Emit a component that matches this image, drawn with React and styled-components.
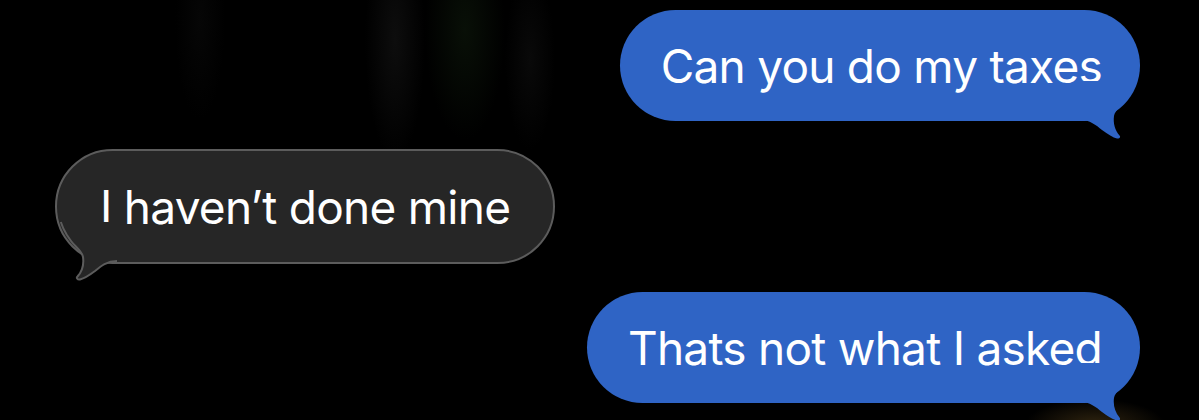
import styled, { createGlobalStyle } from 'styled-components';

const GlobalStyle = createGlobalStyle`
  html, body {
    margin: 0;
    padding: 0;
    background: #000;
  }
  body {
    font-family: Inter, "Noto Sans", sans-serif;
    -webkit-font-smoothing: antialiased;
  }
`;

const Screen = styled.div`
  width: 1199px;
  height: 420px;
  box-sizing: border-box;
  overflow: hidden;
  padding: 10px 59px 0 55px;
  display: flex;
  flex-direction: column;
  gap: 28px;
  background:
    radial-gradient(ellipse 70px 26px at 1095px 425px, rgba(95, 72, 30, 0.5), transparent),
    radial-gradient(ellipse 30px 120px at 395px 40px, rgba(22, 22, 22, 0.6), transparent),
    radial-gradient(ellipse 40px 110px at 465px 30px, rgba(12, 22, 10, 0.7), transparent),
    radial-gradient(ellipse 25px 90px at 530px 60px, rgba(18, 18, 18, 0.5), transparent),
    radial-gradient(ellipse 25px 100px at 200px 20px, rgba(10, 10, 10, 0.6), transparent),
    #000;
`;

const Row = styled.div`
  display: flex;
  justify-content: ${p => (p.$sent ? 'flex-end' : 'flex-start')};
`;

const Bubble = styled.div`
  position: relative;
  box-sizing: border-box;
  height: ${p => (p.$sent ? '111px' : '115px')};
  padding: ${p => (p.$sent ? '0 38px 0 41px' : '0 43px 0 43px')};
  display: flex;
  align-items: center;
  border-radius: 58px;
  background: ${p => (p.$sent ? '#2f64c5' : '#262626')};
  border: ${p => (p.$sent ? 'none' : '2px solid #5c5c5c')};
  color: #fff;
  font-size: 46px;
  line-height: 56px;
  letter-spacing: -0.75px;
  white-space: nowrap;
`;

const Tail = styled.svg`
  position: absolute;
  top: calc(100% - 60px);
  width: 60px;
  height: 80px;
  overflow: visible;
  ${p => (p.$sent ? 'right: 0;' : 'left: 0; transform: scaleX(-1);')}
`;

// tail drawn from the bubble's bottom-right corner (60,60), mirrored for received bubbles
const curve =
  'C 10 59 16 64 22 69 C 28 73.5 33 76.5 37 77.5 C 39.5 78 41 76 39.5 74.5 C 35 69.5 33 62 34 55 C 35 49 42.5 44 46 39 L 50.1 33 A 56.5 56.5 0 0 0 56.2 20';
const fillPath = `M 0 60 L 0 59 ${curve} L 0 20 Z`;
const edgePath = `M 0 59 ${curve}`;

const BubbleTail = ({ sent }) => (
  <Tail $sent={sent} viewBox="0 0 60 80">
    <path d={fillPath} fill={sent ? '#2f64c5' : '#262626'} />
    {!sent && <path d={edgePath} fill="none" stroke="#5c5c5c" strokeWidth="2" strokeLinejoin="round" />}
  </Tail>
);

const messages = [
  { id: 1, sent: true, text: 'Can you do my taxes' },
  { id: 2, sent: false, text: 'I haven’t done mine' },
  { id: 3, sent: true, text: 'Thats not what I asked' },
];

export default function App() {
  return (
    <>
      <GlobalStyle />
      <Screen>
        {messages.map(m => (
          <Row key={m.id} $sent={m.sent}>
            <Bubble $sent={m.sent}>
              {m.text}
              <BubbleTail sent={m.sent} />
            </Bubble>
          </Row>
        ))}
      </Screen>
    </>
  );
}
